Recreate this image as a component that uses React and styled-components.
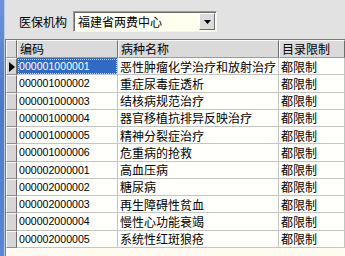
import React from "react";
import styled, { createGlobalStyle } from "styled-components";

const Global = createGlobalStyle`
  html, body { margin: 0; padding: 0; width: 345px; height: 256px; overflow: hidden; }
  body { font-family: "Noto Sans CJK SC", "Liberation Sans", sans-serif; }
`;

const COLS = "11px 101px 161px 66px 1fr";

const Window = styled.div`
  display: flex;
  width: 345px;
  height: 256px;
  background: #e2e2e2;
`;

const Frame = styled.div`
  width: 4px;
  flex: none;
  background: linear-gradient(180deg, #6f93d6 0%, #4f78c4 40%, #5c86cf 100%);
  border-right: 1px solid #b9c9e6;
`;

const Main = styled.div`
  flex: 1;
  display: flex;
  flex-direction: column;
  min-width: 0;
`;

const Toolbar = styled.div`
  height: 39px;
  flex: none;
  display: flex;
  align-items: flex-start;
  padding: 11px 0 0 14px;
  box-sizing: border-box;
  gap: 6px;
`;

const Label = styled.span`
  font-size: 12px;
  line-height: 21px;
  color: #000;
  white-space: nowrap;
`;

const Combo = styled.div`
  width: 144px;
  height: 21px;
  box-sizing: border-box;
  display: flex;
  align-items: center;
  background: #fffff0;
  border: 1px solid #9c9c9c;
  border-right-color: #f4f4f4;
  border-bottom-color: #f4f4f4;
  box-shadow: inset 1px 1px 0 #6a6a6a;
  padding: 0 1px 0 4px;
`;

const ComboText = styled.span`
  flex: 1;
  font-size: 12px;
  line-height: 19px;
  color: #000;
  white-space: nowrap;
`;

const DropButton = styled.div`
  width: 16px;
  height: 17px;
  box-sizing: border-box;
  background: #dcdcdc;
  border: 1px solid;
  border-color: #ffffff #6e6e6e #6e6e6e #ffffff;
  display: flex;
  align-items: center;
  justify-content: center;
`;

const Grid = styled.div`
  flex: 1;
  display: flex;
  flex-direction: column;
  border-top: 1px solid #7a7a7a;
  border-left: 1px solid #7a7a7a;
  background: #fffbf0;
  min-height: 0;
`;

const Row = styled.div`
  display: grid;
  grid-template-columns: ${COLS};
  height: ${(p) => p.$h}px;
  flex: none;
`;

const HeadCell = styled.div`
  box-sizing: border-box;
  background: #dadada;
  border-top: 1px solid #fafafa;
  border-left: 1px solid #fafafa;
  border-right: 1px solid #6e6e6e;
  border-bottom: 1px solid #9a9a9a;
  font-size: 12px;
  line-height: 16px;
  padding-left: 2px;
  color: #000;
  white-space: nowrap;
  overflow: hidden;
`;

const Indicator = styled.div`
  box-sizing: border-box;
  background: #d6d6d6;
  border-top: 1px solid #fafafa;
  border-left: 1px solid #fafafa;
  border-right: 1px solid #6e6e6e;
  border-bottom: 1px solid #8e8e8e;
  display: flex;
  align-items: center;
  justify-content: center;
`;

const Cell = styled.div`
  box-sizing: border-box;
  background: ${(p) => (p.$sel ? "#316ac5" : "#fffffb")};
  color: ${(p) => (p.$sel ? "#ffffff" : "#000000")};
  border-right: 1px solid #c4c4c4;
  border-bottom: 1px solid #c4c4c4;
  font-family: ${(p) =>
    p.$code ? '"Liberation Sans", sans-serif' : '"Noto Sans CJK SC", sans-serif'};
  font-size: ${(p) => (p.$code ? "10.6px" : "12px")};
  display: flex;
  align-items: center;
  padding-left: 2px;
  white-space: nowrap;
  overflow: hidden;
  position: relative;
  outline: ${(p) => (p.$sel ? "1px dotted #c8d8f0" : "none")};
  outline-offset: -2px;
`;

const Filler = styled.div`
  background: #fffbf0;
`;

const rows = [
  ["000001000001", "恶性肿瘤化学治疗和放射治疗", "都限制"],
  ["000001000002", "重症尿毒症透析", "都限制"],
  ["000001000003", "结核病规范治疗", "都限制"],
  ["000001000004", "器官移植抗排异反映治疗", "都限制"],
  ["000001000005", "精神分裂症治疗", "都限制"],
  ["000001000006", "危重病的抢救", "都限制"],
  ["000002000001", "高血压病", "都限制"],
  ["000002000002", "糖尿病", "都限制"],
  ["000002000003", "再生障碍性贫血", "都限制"],
  ["000002000004", "慢性心功能衰竭", "都限制"],
  ["000002000005", "系统性红斑狼疮", "都限制"],
];

const Arrow = () => (
  <svg width="6" height="10" viewBox="0 0 6 10">
    <path d="M0 0 L6 5 L0 10 Z" fill="#000" />
  </svg>
);

const DownTri = () => (
  <svg width="7" height="4" viewBox="0 0 7 4">
    <path d="M0 0 H7 L3.5 4 Z" fill="#000" />
  </svg>
);

export default function App() {
  return (
    <>
      <Global />
      <Window>
        <Frame />
        <Main>
          <Toolbar>
            <Label>医保机构</Label>
            <Combo>
              <ComboText>福建省两费中心</ComboText>
              <DropButton>
                <DownTri />
              </DropButton>
            </Combo>
          </Toolbar>
          <Grid>
            <Row $h={18}>
              <HeadCell />
              <HeadCell>编码</HeadCell>
              <HeadCell>病种名称</HeadCell>
              <HeadCell>目录限制</HeadCell>
              <Filler />
            </Row>
            {rows.map((r, i) => (
              <Row key={r[0]} $h={17.25}>
                <Indicator>{i === 0 ? <Arrow /> : null}</Indicator>
                <Cell $code $sel={i === 0}>{r[0]}</Cell>
                <Cell>{r[1]}</Cell>
                <Cell>{r[2]}</Cell>
                <Filler />
              </Row>
            ))}
          </Grid>
        </Main>
      </Window>
    </>
  );
}
